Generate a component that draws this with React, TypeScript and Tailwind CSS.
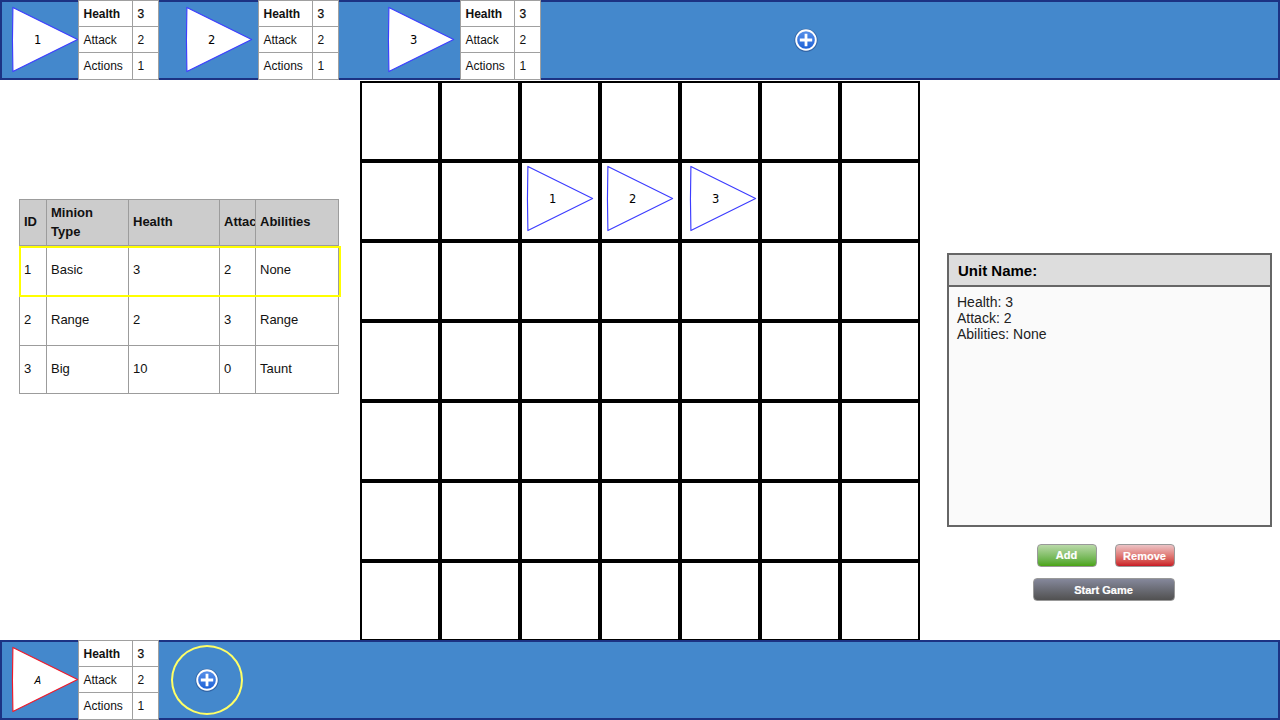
const minions = [
  { id: 1, type: "Basic", health: 3, attack: 2, abilities: "None" },
  { id: 2, type: "Range", health: 2, attack: 3, abilities: "Range" },
  { id: 3, type: "Big", health: 10, attack: 0, abilities: "Taunt" },
];

const stats = [
  { label: "Health", value: 3 },
  { label: "Attack", value: 2 },
  { label: "Actions", value: 1 },
];

const board: Record<number, string> = { 9: "1", 10: "2", 11: "3" };

function Unit({ label, enemy = false }: { label: string; enemy?: boolean }) {
  return (
    <svg width="68" height="68" viewBox="0 0 68 68" className="block shrink-0">
      <path
        d="M1.9 1.4 L66.6 33.4 L1.9 65.6 Q1 33.5 1.9 1.4 Z"
        fill="#fff"
        stroke={enemy ? "#f01828" : "#3c3cff"}
        strokeWidth="1.15"
        strokeLinejoin="round"
      />
      <text
        x="26.7"
        y="38"
        textAnchor="middle"
        fontSize="11.5"
        fill="#000"
        fontStyle={enemy ? "italic" : "normal"}
        className={enemy ? "font-['Open_Sans',sans-serif]" : "font-['DejaVu_Sans',sans-serif]"}
      >
        {label}
      </text>
    </svg>
  );
}

function StatCard() {
  return (
    <div className="grid h-[80px] w-[81px] shrink-0 grid-cols-[54px_26px] grid-rows-[26px_26px_27px] border-l border-t border-[#a0a0a0] bg-white text-[12px] leading-[26px] text-[#111111]">
      {stats.map((s, i) => (
        <div key={s.label} className="contents">
          <div className={i === 0 ? "border-b border-r border-[#a0a0a0] pl-[4.5px] font-bold" : "border-b border-r border-[#a0a0a0] pl-[4.5px]"}>
            {s.label}
          </div>
          <div className={i === 0 ? "border-b border-r border-[#a0a0a0] pl-[4.5px] [-webkit-text-stroke:0.25px_black]" : "border-b border-r border-[#a0a0a0] pl-[4.5px]"}>
            {s.value}
          </div>
        </div>
      ))}
    </div>
  );
}

function Plus() {
  return (
    <svg width="26" height="26" viewBox="0 0 26 26" className="block shrink-0">
      <defs>
        <linearGradient id="plusFill" x1="0" y1="0" x2="0" y2="1">
          <stop offset="0" stopColor="#5b93ea" />
          <stop offset="1" stopColor="#1b5fd6" />
        </linearGradient>
      </defs>
      <circle cx="13" cy="13.3" r="11.6" fill="#1d3f80" opacity="0.5" />
      <circle cx="13" cy="13" r="9.8" fill="url(#plusFill)" stroke="#fff" strokeWidth="1.9" />
      <path d="M13 6.8V19.2M6.8 13H19.2" stroke="#fff" strokeWidth="2.8" />
    </svg>
  );
}

const cell = "flex items-center overflow-hidden whitespace-nowrap border-b border-r border-[#9c9c9c] pb-[2px] pl-1";

export default function App() {
  return (
    <div className="flex h-[720px] w-[1280px] flex-col overflow-hidden bg-white font-['Liberation_Sans',Arial,sans-serif] text-black">
      <header className="flex h-20 shrink-0 border-2 border-[#1c3283] bg-[#4488cc]">
        <div className="-my-[2px] flex items-start">
          <div className="ml-[9px] mt-[6px]"><Unit label="1" /></div>
          <div className="-ml-px"><StatCard /></div>
          <div className="ml-[26px] mt-[6px]"><Unit label="2" /></div>
          <div className="ml-[5px]"><StatCard /></div>
          <div className="ml-[48px] mt-[6px]"><Unit label="3" /></div>
          <div className="ml-[5px]"><StatCard /></div>
          <div className="ml-[252px] mt-[27px]"><Plus /></div>
        </div>
      </header>

      <main className="flex h-[560px] shrink-0">
        <section className="w-[360px] shrink-0 pl-[19px] pt-[119px] text-[13px] leading-[19px] text-[#111111]">
          <div className="w-[320px] border-l border-t border-[#9c9c9c]">
            <div className="grid h-[46px] grid-cols-[27px_82px_91px_36px_83px] bg-[#cccccc] font-bold">
              <div className={cell}>ID</div>
              <div className={cell}>Minion<br />Type</div>
              <div className={cell}>Health</div>
              <div className={cell}>Attack</div>
              <div className={cell}>Abilities</div>
            </div>
            {minions.map((m) => (
              <div
                key={m.id}
                className={
                  m.id === 1
                    ? "relative grid h-[50px] grid-cols-[27px_82px_91px_36px_83px] after:absolute after:-left-px after:top-0 after:h-[51px] after:w-[322px] after:border-2 after:border-[#ffff00]"
                    : m.id === 2
                      ? "grid h-[50px] grid-cols-[27px_82px_91px_36px_83px]"
                      : "grid h-[48px] grid-cols-[27px_82px_91px_36px_83px]"
                }
              >
                <div className={cell}>{m.id}</div>
                <div className={cell}>{m.type}</div>
                <div className={cell}>{m.health}</div>
                <div className={cell}>{m.attack}</div>
                <div className={cell}>{m.abilities}</div>
              </div>
            ))}
          </div>
        </section>

        <section className="mt-px grid h-[560px] w-[560px] shrink-0 grid-cols-7 grid-rows-7">
          {Array.from({ length: 49 }, (_, i) => (
            <div key={i} className="border-2 border-black">
              {board[i] && (
                <div className={i === 11 ? "ml-[7px] mt-[2px]" : "ml-[4px] mt-[2px]"}>
                  <Unit label={board[i]} />
                </div>
              )}
            </div>
          ))}
        </section>

        <aside className="flex flex-1 flex-col pl-[27px] pr-2 pt-[173px]">
          <div className="h-[274px] w-[325px] border-2 border-[#666666] bg-[#fafafa]">
            <div className="h-[32px] border-b-2 border-[#666666] bg-[#dddddd] pl-[9px] text-[15px] font-bold leading-[31px]">
              Unit Name:
            </div>
            <div className="pl-2 pt-[7px] text-[14px] leading-4 text-[#222222]">
              <p>Health: 3</p>
              <p>Attack: 2</p>
              <p>Abilities: None</p>
            </div>
          </div>
          <div className="ml-[89.5px] mt-[17px] flex gap-[18px] text-[11px] font-bold text-white">
            <button className="h-[23px] w-[60px] rounded-[4px] border border-[#999999] bg-linear-to-b from-[#b9d9a8] to-[#4aa40f] leading-[21px] [-webkit-text-stroke:0.2px_white]">Add</button>
            <button className="h-[23px] w-[60px] whitespace-nowrap rounded-[4px] border border-[#999999] bg-linear-to-b from-[#ebc3c6] to-[#c91625] leading-[22px] [-webkit-text-stroke:0.2px_white]">Remove</button>
          </div>
          <button className="ml-[85.5px] mt-[11px] h-[23px] w-[142px] rounded-[4px] border border-[#999999] bg-linear-to-b from-[#85889b] to-[#515151] text-[11px] font-bold leading-[22px] text-white [-webkit-text-stroke:0.2px_white]">
            Start Game
          </button>
        </aside>
      </main>

      <footer className="relative z-10 flex h-20 shrink-0 border-2 border-[#1c3283] bg-[#4488cc]">
        <div className="-my-[2px] flex items-start">
          <div className="ml-[9px] mt-[6px]"><Unit label="A" enemy /></div>
          <div className="-ml-px"><StatCard /></div>
          <div className="ml-[12px] mt-[5px] flex h-[70px] w-[72px] items-center justify-center rounded-[50%] border-2 border-[#ffff66]">
            <Plus />
          </div>
        </div>
      </footer>
    </div>
  );
}
